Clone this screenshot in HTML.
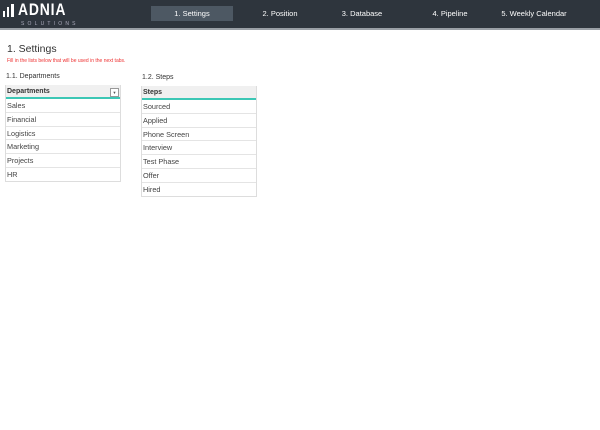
<!DOCTYPE html>
<html><head><style>
body{margin:0;width:600px;height:430px;background:#fff;font-family:"Liberation Sans",sans-serif;position:relative;overflow:hidden}
.hdr{position:absolute;left:0;top:0;width:600px;height:28px;background:#2e353d;border-bottom:2px solid #9aa0a6}
.nav{position:absolute;top:6px;height:15px;line-height:15px;color:#fff;font-size:7.5px;text-align:center}
.act{background:#4d5863}
.bar{position:absolute;background:#fff}
.logo{position:absolute;left:18px;top:0px;color:#fff;font-weight:bold;font-size:17px;letter-spacing:1px;transform:scaleX(0.82);transform-origin:left}
.sol{position:absolute;left:21px;top:21px;color:#aab;font-size:5px;letter-spacing:3.2px}
.t{position:absolute;color:#333;white-space:nowrap}
.tbl{position:absolute;border:1px solid #ddd;border-top:none}
.th{height:12px;background:#f0f0f0;border-bottom:2px solid #3cc7b5;font-weight:bold;font-size:7px;color:#333;line-height:13px;padding-left:1px;position:relative}
.r{height:12.8px;border-bottom:1px solid #e4e4e4;font-size:7.3px;color:#444;line-height:14px;padding-left:1px}
</style></head><body>
<div class="hdr">
<div class="bar" style="left:3px;top:11px;width:2px;height:6px"></div>
<div class="bar" style="left:7px;top:7px;width:2px;height:10px"></div>
<div class="bar" style="left:11px;top:4px;width:3px;height:13px"></div>
<div class="logo">ADNIA</div><div class="sol">SOLUTIONS</div>
<div class="nav act" style="left:151px;width:82px">1. Settings</div>
<div class="nav" style="left:245px;width:70px">2. Position</div>
<div class="nav" style="left:327px;width:70px">3. Database</div>
<div class="nav" style="left:415px;width:70px">4. Pipeline</div>
<div class="nav" style="left:494px;width:80px">5. Weekly Calendar</div>
</div>
<div class="t" style="left:7px;top:43px;font-size:10.5px">1. Settings</div>
<div class="t" style="left:7px;top:58px;font-size:5px;color:#e33">Fill in the lists below that will be used in the next tabs.</div>
<div class="t" style="left:6px;top:73px;font-size:7px">1.1. Departments</div>
<div class="t" style="left:142px;top:74px;font-size:7px">1.2. Steps</div>
<div class="tbl" style="left:5px;top:85px;width:114px">
<div class="th">Departments<span style="position:absolute;right:1px;top:3px;width:7px;height:7px;border:1px solid #999;background:#fff;font-size:4px;line-height:7px;text-align:center;color:#555">▼</span></div>
<div class="r">Sales</div><div class="r">Financial</div><div class="r">Logistics</div><div class="r">Marketing</div><div class="r">Projects</div><div class="r" style="border-bottom:none">HR</div>
</div>
<div class="tbl" style="left:141px;top:86px;width:114px">
<div class="th">Steps</div>
<div class="r">Sourced</div><div class="r">Applied</div><div class="r">Phone Screen</div><div class="r">Interview</div><div class="r">Test Phase</div><div class="r">Offer</div><div class="r" style="border-bottom:none">Hired</div>
</div>
</body></html>
